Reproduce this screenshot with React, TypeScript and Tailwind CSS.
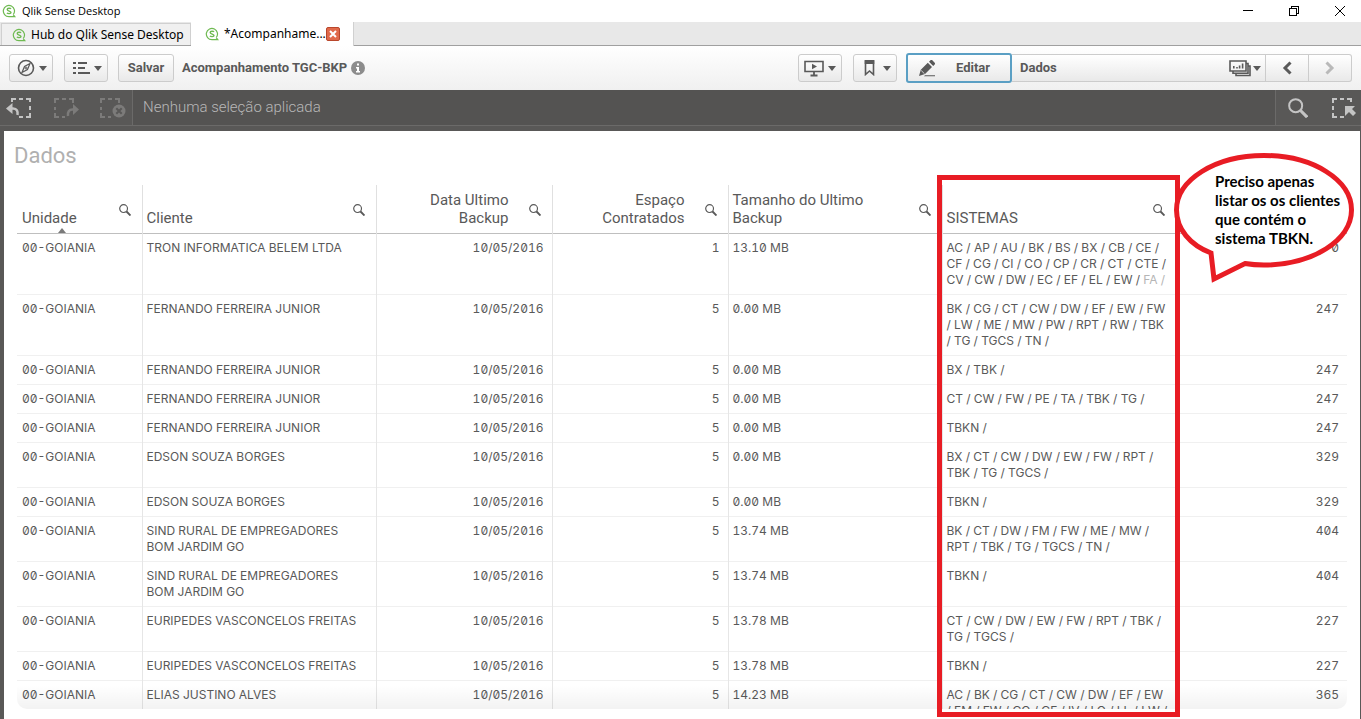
import { ReactNode } from 'react'
import clsx from 'clsx'

type Row = {
  cliente: string
  espaco: string
  tamanho: string
  sistemas: string[]
  faded?: string
  total: string
}

const rows: Row[] = [
  {
    cliente: 'TRON INFORMATICA BELEM LTDA',
    espaco: '1',
    tamanho: '13.10 MB',
    sistemas: [
      'AC / AP / AU / BK / BS / BX / CB / CE /',
      'CF / CG / CI / CO / CP / CR / CT / CTE /',
      'CV / CW / DW / EC / EF / EL / EW /',
    ],
    faded: 'FA /',
    total: '0',
  },
  {
    cliente: 'FERNANDO FERREIRA JUNIOR',
    espaco: '5',
    tamanho: '0.00 MB',
    sistemas: [
      'BK / CG / CT / CW / DW / EF / EW / FW',
      '/ LW / ME / MW / PW / RPT / RW / TBK',
      '/ TG / TGCS / TN /',
    ],
    total: '247',
  },
  { cliente: 'FERNANDO FERREIRA JUNIOR', espaco: '5', tamanho: '0.00 MB', sistemas: ['BX / TBK /'], total: '247' },
  {
    cliente: 'FERNANDO FERREIRA JUNIOR',
    espaco: '5',
    tamanho: '0.00 MB',
    sistemas: ['CT / CW / FW / PE / TA / TBK / TG /'],
    total: '247',
  },
  { cliente: 'FERNANDO FERREIRA JUNIOR', espaco: '5', tamanho: '0.00 MB', sistemas: ['TBKN /'], total: '247' },
  {
    cliente: 'EDSON SOUZA BORGES',
    espaco: '5',
    tamanho: '0.00 MB',
    sistemas: ['BX / CT / CW / DW / EW / FW / RPT /', 'TBK / TG / TGCS /'],
    total: '329',
  },
  { cliente: 'EDSON SOUZA BORGES', espaco: '5', tamanho: '0.00 MB', sistemas: ['TBKN /'], total: '329' },
  {
    cliente: 'SIND RURAL DE EMPREGADORES BOM JARDIM GO',
    espaco: '5',
    tamanho: '13.74 MB',
    sistemas: ['BK / CT / DW / FM / FW / ME / MW /', 'RPT / TBK / TG / TGCS / TN /'],
    total: '404',
  },
  {
    cliente: 'SIND RURAL DE EMPREGADORES BOM JARDIM GO',
    espaco: '5',
    tamanho: '13.74 MB',
    sistemas: ['TBKN /'],
    total: '404',
  },
  {
    cliente: 'EURIPEDES VASCONCELOS FREITAS',
    espaco: '5',
    tamanho: '13.78 MB',
    sistemas: ['CT / CW / DW / EW / FW / RPT / TBK /', 'TG / TGCS /'],
    total: '227',
  },
  { cliente: 'EURIPEDES VASCONCELOS FREITAS', espaco: '5', tamanho: '13.78 MB', sistemas: ['TBKN /'], total: '227' },
  {
    cliente: 'ELIAS JUSTINO ALVES',
    espaco: '5',
    tamanho: '14.23 MB',
    sistemas: ['AC / BK / CG / CT / CW / DW / EF / EW', '/ FM / FW / GO / GF / IV / LO / LL / LW /'],
    total: '365',
  },
]

const columns = [
  { label: 'Unidade', width: 'w-[125px]', right: false, sorted: true },
  { label: 'Cliente', width: 'w-[234px]', right: false },
  { label: 'Data Ultimo Backup', width: 'w-[176px]', right: true },
  { label: 'Espaço Contratados', width: 'w-[176px]', right: true },
  { label: 'Tamanho do Ultimo Backup', width: 'w-[214px]', right: false },
  { label: 'SISTEMAS', width: 'w-[234px]', right: false },
]

function QlikLogo({ className }: { className?: string }) {
  return (
    <svg viewBox="0 0 14 14" className={clsx('size-[14px] shrink-0', className)} fill="none" stroke="#6fba52">
      <path d="M11.2 10.600A5.600 5.600 0 1 0 7 12.600h5.800l-1.600-2" strokeWidth="1.200" />
      <path d="M9 4.900C8.400 4.100 5.200 3.900 5.200 5.600S9 7 9 8.500 5.700 9.900 4.900 8.900" strokeWidth="1.400" />
    </svg>
  )
}

function Caret() {
  return (
    <svg viewBox="0 0 8 5" className="w-2 h-[5px] shrink-0" fill="#595959">
      <path d="M0 0h8L4 5z" />
    </svg>
  )
}

function SearchIcon({ className }: { className?: string }) {
  return (
    <svg viewBox="0 0 12 12" className={className} fill="none" stroke="currentColor">
      <circle cx="4.600" cy="4.600" r="3.900" strokeWidth="1.200" />
      <path d="M7.500 7.500l4 4" strokeWidth="1.900" />
    </svg>
  )
}

function ToolButton({ label, className, children }: { label: string; className?: string; children: ReactNode }) {
  return (
    <button
      aria-label={label}
      className={clsx(
        'h-7 flex items-center justify-center border border-[#ccc] rounded-[3px] bg-linear-to-b from-white to-[#e9e9e9] shrink-0',
        className
      )}>
      {children}
    </button>
  )
}

function TitleBar() {
  return (
    <header className="h-[22px] shrink-0 flex items-center bg-white pl-[2px] pr-4 font-['Open_Sans',sans-serif] text-[11px] text-black">
      <QlikLogo className="mr-[6px]" />
      <h1 className="flex-1">Qlik Sense Desktop</h1>
      <div className="flex items-center gap-9">
        <button aria-label="Minimizar">
          <svg viewBox="0 0 10 10" className="size-[10px]" stroke="#000" shapeRendering="crispEdges">
            <path d="M0 4.500h10" />
          </svg>
        </button>
        <button aria-label="Restaurar">
          <svg viewBox="0 0 10 10" className="size-[10px]" fill="none" stroke="#000" shapeRendering="crispEdges">
            <path d="M.5 2.500h7v7h-7zM2.500 2.500v-2h7v7h-2" />
          </svg>
        </button>
        <button aria-label="Fechar">
          <svg viewBox="0 0 10 10" className="size-[10px]" fill="none" stroke="#000">
            <path d="M0 0l10 10M10 0L0 10" />
          </svg>
        </button>
      </div>
    </header>
  )
}

function TabStrip() {
  return (
    <nav className="h-6 shrink-0 flex items-end bg-[#e8e8e8] border-b border-[#a0a0a0] pl-px font-['Noto_Sans',sans-serif] text-xs text-black">
      <button className="h-[22px] w-[190px] flex items-center gap-[5px] pl-[10px] whitespace-nowrap bg-[#f0f0f0] border border-b-0 border-[#d0d0d0]">
        <QlikLogo />
        Hub do Qlik Sense Desktop
      </button>
      <div className="h-6 -mb-px w-[163px] flex items-center pl-[14px] bg-white border-r border-[#d0d0d0]">
        <QlikLogo className="mr-[5px]" />
        <button>*Acompanhame...</button>
        <button
          aria-label="Fechar aba"
          className="size-[14px] flex items-center justify-center rounded-[2px] border border-[#b9472c] bg-[#e0694a]">
          <svg viewBox="0 0 8 8" className="size-2" stroke="#fff" strokeWidth="2">
            <path d="M1 1l6 6M7 1L1 7" />
          </svg>
        </button>
      </div>
    </nav>
  )
}

function Toolbar() {
  return (
    <div className="h-11 shrink-0 flex items-center px-[9px] bg-linear-to-b from-white to-[#f0f0f0] font-['Roboto',sans-serif] text-[13px] font-bold text-[#595959]">
      <ToolButton label="Navegação" className="w-11 pl-[2px] gap-1">
        <svg viewBox="0 0 18 18" className="size-[18px]" fill="none" stroke="#595959">
          <circle cx="9" cy="9" r="7.500" strokeWidth="1.600" />
          <path d="M13 4.500L10.500 10.500 5 13.500 7.500 7.500z" strokeWidth="1.200" />
          <circle cx="9" cy="9" r="1" />
        </svg>
        <Caret />
      </ToolButton>
      <ToolButton label="Menu" className="w-11 ml-[11px] pl-[2px] gap-1">
        <svg viewBox="0 0 17 14" className="w-[17px] h-[14px]" fill="#595959">
          <path d="M0 1h3v2H0zM0 6h3v2H0zM0 11h3v2H0zM5 1h9v2H5zM5 6h7v2H5zM5 11h12v2H5z" />
        </svg>
        <Caret />
      </ToolButton>
      <ToolButton label="Salvar" className="w-14 ml-[10px]">
        Salvar
      </ToolButton>
      <span className="ml-2">Acompanhamento TGC-BKP</span>
      <button aria-label="Informações" className="ml-1">
        <svg viewBox="0 0 14 14" className="size-[14px]">
          <circle cx="7" cy="7" r="7" fill="#8c8c8c" />
          <path d="M6 2.500h2v2H6zM5 6h3v4h1v1.500H5V10h1V7.400H5z" fill="#fff" />
        </svg>
      </button>
      <div className="flex-1" />
      <ToolButton label="Apresentação" className="w-11 gap-1">
        <svg viewBox="0 0 20 17" className="w-5 h-[17px]" fill="none" stroke="#595959">
          <path d="M1 1.500h18v10H1z" strokeWidth="1.600" />
          <path d="M8 3.800l5 2.700-5 2.700z" fill="#595959" stroke="none" />
          <path d="M10 12v3.500M6.500 15.500h7" strokeWidth="1.800" />
        </svg>
        <Caret />
      </ToolButton>
      <ToolButton label="Marcadores" className="w-11 ml-[11px] pl-1 gap-2">
        <svg viewBox="0 0 11 16" className="w-[11px] h-4">
          <path d="M1.500 1h8v13.500l-4-3.500-4 3.500z" fill="none" stroke="#595959" strokeWidth="1.600" />
          <path d="M.7 0h9.600v4H.7z" fill="#595959" />
        </svg>
        <Caret />
      </ToolButton>
      <button className="h-[30px] w-[106px] ml-[9px] flex items-center pl-[11px] gap-5 border-2 border-[#5a9fc4] rounded-[3px] bg-linear-to-b from-white to-[#e9e9e9]">
        <svg viewBox="0 0 17 17" className="size-[17px]" fill="#595959">
          <path d="M0 16l1.800-6.200L8.800 2.800l4.200 4.200-7 7zM10 1.700L11.500.3c.6-.5 1.300-.4 1.800 0l2.400 2.400c.5.600.5 1.200 0 1.800L14.200 5.900zM6 15.200h10v1H5z" />
          <path d="M2.200 10.500l3.300 3.300" stroke="#f2f2f2" strokeWidth=".8" />
        </svg>
        Editar
      </button>
      <div className="h-7 w-[340px] flex items-center border border-l-0 border-[#ccc] rounded-r-[3px] bg-linear-to-b from-white to-[#e9e9e9]">
        <span className="flex-1 pl-2">Dados</span>
        <button aria-label="Pastas" className="flex items-center gap-[2px] pr-1">
          <svg viewBox="0 0 22 17" className="w-[22px] h-[17px]" fill="none" stroke="#595959" strokeWidth="1.600">
            <path d="M1 1h16v10H1zM17 3.500h2v9.700H4V11.500M19 6h2v9.500H7v-2" />
            <path d="M4.800 8.500V6M8 8.500V7M10.600 8.500V5.500M13.600 8.500V3.500" />
          </svg>
          <Caret />
        </button>
        <button aria-label="Anterior" className="h-full w-[43px] flex items-center justify-center border-l border-[#ccc]">
          <svg viewBox="0 0 10 14" className="w-[10px] h-[14px]" fill="none" stroke="#595959" strokeWidth="3">
            <path d="M8.500 1.500L3 7l5.500 5.500" />
          </svg>
        </button>
        <button aria-label="Próxima" className="h-full w-[43px] flex items-center justify-center border-l border-[#ccc]">
          <svg viewBox="0 0 10 14" className="w-[10px] h-[14px]" fill="none" stroke="#b9b9b9" strokeWidth="3">
            <path d="M1.500 1.500L7 7l-5.500 5.500" />
          </svg>
        </button>
      </div>
    </div>
  )
}

function SelectionBar() {
  return (
    <div className="h-9 shrink-0 flex bg-[#545352] border-b border-[#6b6a69] text-[#b8b8b8]">
      <div className="w-[133px] flex items-center pt-px pl-[6px] gap-[21px] bg-[#595857] border-r border-[#6b6a69]">
        <button aria-label="Voltar seleção">
          <svg viewBox="0 0 26 20" className="w-[26px] h-5" fill="none" stroke="#c4c4c4" strokeWidth="2">
            <path d="M6 4V1h4M13 1h4M20 1h4v3M24 8v4M24 15v4h-4M17 19h-4" />
            <path d="M4 10.500h3c4 0 5 3 4.500 6.500" strokeWidth="2.500" />
            <path d="M6.500 5v11L0 10.500z" fill="#c4c4c4" stroke="none" />
          </svg>
        </button>
        <button aria-label="Avançar seleção">
          <svg viewBox="0 0 26 20" className="w-[26px] h-5" fill="none" stroke="#7c7b7a" strokeWidth="2">
            <path d="M2 5V1h4M9 1h4M16 1h4v4M2 9v3M2 15v4h4M9 19h3" />
            <path d="M15 18c-.5-4 1-6.500 4.500-6.500h2" strokeWidth="2.500" />
            <path d="M20 6v11l6-5.500z" fill="#7c7b7a" stroke="none" />
          </svg>
        </button>
        <button aria-label="Limpar seleções">
          <svg viewBox="0 0 26 20" className="w-[26px] h-5" fill="none" stroke="#7c7b7a" strokeWidth="2">
            <path d="M1 5V1h4M8 1h4M15 1h4v4M1 9v3M1 15v4h4M8 19h3" />
            <circle cx="19" cy="13" r="6.500" fill="#7c7b7a" stroke="none" />
            <path d="M16.300 10.300l5.400 5.400M21.700 10.300l-5.400 5.400" stroke="#595857" />
          </svg>
        </button>
      </div>
      <p className="flex-1 flex items-center pl-[10px] font-['Roboto',sans-serif] text-[15px] font-light">
        Nenhuma seleção aplicada
      </p>
      <div className="w-[86px] flex items-center pt-px pl-3 gap-6 bg-[#595857] border-l border-[#6b6a69]">
        <button aria-label="Pesquisar">
          <SearchIcon className="size-5 text-[#c4c4c4]" />
        </button>
        <button aria-label="Ferramenta de seleção">
          <svg viewBox="0 0 24 20" className="w-6 h-5" fill="none" stroke="#c4c4c4" strokeWidth="2">
            <path d="M1 5V1h4M8 1h4M15 1h4v3M1 8v4M1 15v4h4M8 19h4" />
            <path d="M13 8h10l-3 3 4 4-3 3-4-4-4 4z" fill="#c4c4c4" stroke="none" />
          </svg>
        </button>
      </div>
    </div>
  )
}

function DataTable() {
  return (
    <table className="w-full table-fixed border-collapse font-['Inter',sans-serif] text-xs leading-4 text-[#595959] tabular-nums slashed-zero">
      <thead className="font-['Roboto',sans-serif] text-[15px] leading-[18px]">
        <tr className="h-12 border-b border-[#bfbfbf]">
          {columns.map((col) => (
            <th
              key={col.label}
              className={clsx(
                'relative p-0 pl-1 first:pl-[5px] pb-[6px] font-normal align-bottom border-r border-[#e0e0e0]',
                col.width
              )}>
              <div className="flex items-end">
                <span className={clsx('flex-1', col.right ? 'text-right pl-10' : 'text-left')}>{col.label}</span>
                <button aria-label={`Pesquisar ${col.label}`} className="ml-5 mr-[11px] mb-[11px]">
                  <SearchIcon className="size-3" />
                </button>
              </div>
              {col.sorted && (
                <svg viewBox="0 0 8 5" className="absolute bottom-0 left-[41px] w-2 h-[5px]" fill="#7a7a7a">
                  <path d="M4 0l4 5H0z" />
                </svg>
              )}
            </th>
          ))}
          <th className="p-0" />
        </tr>
      </thead>
      <tbody>
        {rows.map((row, i) => (
          <tr
            key={i}
            className="border-b border-[#f0f0f0] align-top [&>td]:py-[6px] [&>td]:pl-1 [&>td:first-child]:pl-[5px] [&>td]:pr-2 [&>td:not(:last-child)]:border-r [&>td:not(:last-child)]:border-r-[#e6e6e6]">
            <td>00-GOIANIA</td>
            <td>{row.cliente}</td>
            <td className="text-right">10/05/2016</td>
            <td className="text-right">{row.espaco}</td>
            <td>{row.tamanho}</td>
            <td className="whitespace-nowrap">
              {row.sistemas.map((line, n) => (
                <div key={line}>
                  {line}
                  {row.faded && n === row.sistemas.length - 1 && <span className="text-[#b5b5b5]"> {row.faded}</span>}
                </div>
              ))}
            </td>
            <td className="text-right">{row.total}</td>
          </tr>
        ))}
      </tbody>
    </table>
  )
}

function Annotation() {
  return (
    <>
      <div className="absolute left-[933px] top-11 bottom-[2px] w-[243px] border-5 border-[#e81c24] pointer-events-none" />
      <div className="absolute left-[1170px] top-[22px] w-[180px] h-[131px]">
        <svg viewBox="0 0 180 131" className="absolute inset-0 size-full" fill="#fff" stroke="#e81c24" strokeWidth="5">
          <path d="M37 100C16 92 2.500 76 2.500 57 2.500 27 41 2.500 90 2.500S177.500 27 177.500 57 139 112 90 112C83 112 77 111.500 71 110.500L40 126z" />
        </svg>
        <p className="relative pl-[41px] pt-[19px] font-['Lato',sans-serif] text-[15px] leading-[19px] font-bold text-black whitespace-nowrap">
          Preciso apenas
          <br />
          listar os os clientes
          <br />
          que contém o
          <br />
          sistema TBKN.
        </p>
      </div>
    </>
  )
}

function App() {
  return (
    <div className="h-screen flex flex-col overflow-hidden bg-[#595857]">
      <TitleBar />
      <TabStrip />
      <Toolbar />
      <SelectionBar />
      <main className="relative flex-1 min-h-0 flex flex-col mt-[5px] ml-1 mr-px px-[13px] pb-[10px] bg-white">
        <h2 className="h-[54px] shrink-0 -ml-[3px] pt-[13px] font-['Roboto',sans-serif] text-[22px] leading-6 text-[#b0b0b0]">
          Dados
        </h2>
        <div className="relative flex-1 min-h-0 overflow-hidden rounded-b-[10px]">
          <DataTable />
          <div className="absolute inset-x-0 bottom-0 h-6 bg-linear-to-b from-transparent to-black/5" />
        </div>
        <Annotation />
      </main>
    </div>
  )
}

export default App
